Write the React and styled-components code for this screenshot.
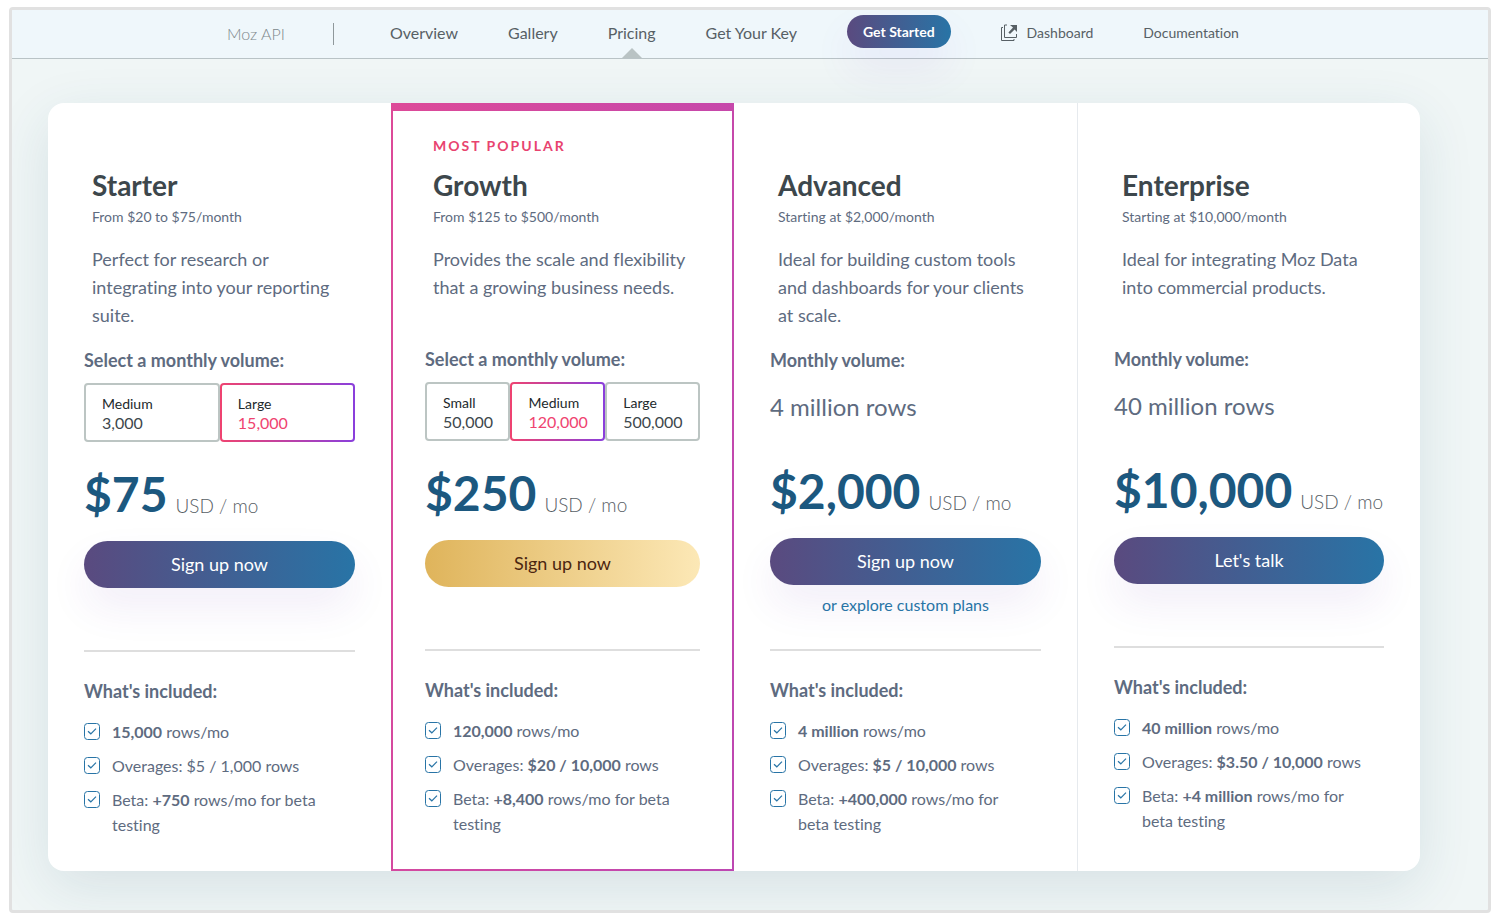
import React, { useState } from 'react';
import styled, { createGlobalStyle, css } from 'styled-components';

const GlobalStyle = createGlobalStyle`
  * {
    box-sizing: border-box;
  }

  body {
    margin: 0;
    padding: 7px 9px;
    background: #fff;
    color: #5e6b80;
    font-family: Lato, 'Liberation Sans', sans-serif;
    font-size: 16px;
    font-variant-ligatures: none;
  }

  h2, h3, p, ul, fieldset {
    margin: 0;
    padding: 0;
    border: 0;
  }

  button, input {
    font-family: inherit;
  }
`;

const gradients = {
  primary: 'linear-gradient(90deg, #5a4a7f 0%, #2874a6 100%)',
  gold: 'linear-gradient(90deg, #dfb45b 0%, #fce8b6 100%)',
  popular: 'linear-gradient(100deg, #dd4a98 0%, #bd47b2 100%)',
  selected: 'linear-gradient(90deg, #ef4370 0%, #8a3fdc 100%)',
};

const Page = styled.div`
  min-height: 906px;
  border: 3px solid #e1e1e1;
  border-radius: 4px;
  background: #f0f6f6;
  overflow: hidden;
`;

/* ---------- Top bar ---------- */

const Header = styled.header`
  position: relative;
  z-index: 1;
  border-bottom: 1px solid #b9c3c6;
  background: #eff7fb;
`;

const Nav = styled.nav`
  display: flex;
  align-items: center;
  justify-content: center;
  gap: 50px;
  height: 48px;
  padding-right: 34px;
  white-space: nowrap;
`;

const Brand = styled.span`
  margin-right: 6px;
  padding-right: 48px;
  border-right: 1px solid #8f989b;
  color: #7d878b;
  font-weight: 300;
  line-height: 22px;
`;

const NavLink = styled.a`
  display: flex;
  align-items: center;
  gap: 9px;
  height: 48px;
  padding-bottom: 3px;
  color: #576065;
  font-size: ${({ $small }) => ($small ? '14px' : '16px')};
  text-decoration: none;

  ${({ $active }) =>
    $active &&
    css`
      position: relative;

      &::after {
        content: '';
        position: absolute;
        bottom: 0;
        left: 50%;
        margin-left: -10px;
        border: 10px solid transparent;
        border-top: 0;
        border-bottom-color: #b9c3c4;
      }
    `}
`;

const StartButton = styled.button`
  height: 33px;
  margin-bottom: 5px;
  padding: 0 16px;
  border: 0;
  border-radius: 17px;
  background: ${gradients.primary};
  box-shadow: 0 20px 40px rgba(110, 50, 200, 0.08);
  color: #fff;
  font-size: 14px;
  font-weight: 700;
`;

/* ---------- Pricing table ---------- */

const Main = styled.main`
  padding: 44px 68px 39px 36px;
`;

const Plans = styled.section`
  display: grid;
  grid-template-columns: repeat(4, minmax(0, 1fr));
  min-height: 768px;
  border-radius: 16px;
  background: #fff;
  box-shadow: 0 16px 56px rgba(30, 80, 110, 0.12);
`;

const Plan = styled.article`
  padding: 33px 36px 32px;

  &:last-child {
    border-left: 1px solid #e6eaee;
  }

  ${({ $popular }) =>
    $popular &&
    css`
      padding: 25px 32px 30px;
      border: 2px solid transparent;
      border-top-width: 8px;
      background: linear-gradient(#fff, #fff) padding-box, ${gradients.popular} border-box;
    `}
`;

const Intro = styled.div`
  padding: 0 8px;
`;

const Tag = styled.p`
  height: 20px;
  color: #e8436f;
  font-size: 14px;
  font-weight: 700;
  letter-spacing: 2px;
  line-height: 20px;
  text-transform: uppercase;
`;

const PlanName = styled.h2`
  margin-top: 11px;
  color: #3d474c;
  font-size: 28px;
  font-weight: 700;
  line-height: 36px;
`;

const Range = styled.p`
  margin-top: 4px;
  font-size: 14px;
  line-height: 20px;
`;

const Description = styled.p`
  min-height: 85px;
  margin-top: 18px;
  padding-bottom: 2px;
  font-size: 18px;
  line-height: 28px;
`;

const SubTitle = styled.h3`
  font-size: 18px;
  font-weight: 700;
  line-height: 24px;
`;

const Volume = styled.fieldset`
  min-width: 0;
  margin-top: 17px;
`;

const VolumeLegend = styled(SubTitle).attrs({ as: 'legend' })`
  padding: 0;
`;

const Options = styled.div`
  display: flex;
  margin-top: 11px;
`;

const Option = styled.label`
  flex: 1 1 auto;
  height: 59px;
  padding: 9px 14px 0 16px;
  border: 2px solid #bcc5c3;
  border-radius: 4px;
  color: #22292c;
  font-size: 14px;
  line-height: 20px;
  white-space: nowrap;
  cursor: pointer;

  &:has(input:checked) {
    border-color: transparent;
    background: linear-gradient(#fff, #fff) padding-box, ${gradients.selected} border-box;
  }
`;

const HiddenRadio = styled.input`
  position: absolute;
  opacity: 0;
`;

const OptionRows = styled.span`
  display: block;
  color: #3d474c;
  font-size: 16px;
  line-height: 18px;

  input:checked ~ & {
    color: #ef4370;
  }
`;

const FixedVolume = styled.div`
  margin-top: 17px;
`;

const FixedRows = styled.p`
  height: 56px;
  margin-top: 11px;
  font-size: 24px;
  line-height: 48px;
`;

const Price = styled.p`
  display: flex;
  align-items: flex-end;
  gap: 8px;
  margin-top: 23px;
  color: #1c587f;
  font-size: 48px;
  font-weight: 700;
  line-height: 58px;
  white-space: nowrap;
`;

const Unit = styled.small`
  color: #576065;
  font-size: 19px;
  font-weight: 300;
  line-height: 34px;
`;

const Action = styled.button`
  display: block;
  width: 100%;
  height: 47px;
  margin-top: 18px;
  padding: 0 0 2px;
  border: 0;
  border-radius: 24px;
  background: ${({ $gold }) => ($gold ? gradients.gold : gradients.primary)};
  box-shadow: ${({ $gold }) => ($gold ? 'none' : '0 20px 40px rgba(90, 40, 170, 0.08)')};
  color: ${({ $gold }) => ($gold ? '#4c2610' : '#fff')};
  font-size: 18px;
  cursor: pointer;
`;

const Extra = styled.div`
  min-height: 62px;
  padding-top: 8px;
  text-align: center;
`;

const CustomLink = styled.a`
  display: block;
  padding-bottom: 32px;
  color: #2874a6;
  line-height: 24px;
  text-decoration: none;
`;

const Divider = styled.hr`
  height: 2px;
  margin: 0 0 27px;
  border: 0;
  background: #dedede;
`;

const Features = styled.ul`
  display: grid;
  gap: 9px;
  margin-top: 16px;
  padding-right: 12px;
  list-style: none;
`;

const Feature = styled.li`
  display: flex;
  align-items: flex-start;
  gap: 12px;
  line-height: 25px;

  svg {
    flex: none;
    margin-top: 4px;
  }
`;

const CheckIcon = () => (
  <svg width="16" height="17" viewBox="0 0 16 17" fill="none" stroke="#2874a6" aria-hidden="true">
    <rect x="0.5" y="0.5" width="15" height="16" rx="3" />
    <path d="M4 8.2l2.8 2.6L12 5.6" strokeWidth="1.2" />
  </svg>
);

const ExternalIcon = () => (
  <svg width="17" height="18" viewBox="0 0 17 18" fill="none" stroke="#576065" aria-hidden="true">
    <path d="M6 1H3.5v12.5h12V10" />
    <path d="M2 3.5H0.5v13H13V15" />
    <path d="M9 1h7v7l-2.4-2.4L9 10 7.4 8.4 12 3.6z" fill="#576065" stroke="none" />
  </svg>
);

const plans = [
  {
    name: 'Starter',
    range: 'From $20 to $75/month',
    description: 'Perfect for research or integrating into your reporting suite.',
    options: [
      { label: 'Medium', rows: '3,000' },
      { label: 'Large', rows: '15,000' },
    ],
    selected: '15,000',
    price: '$75',
    action: 'Sign up now',
    features: [
      <><b>15,000</b> rows/mo</>,
      <>Overages: $5 / 1,000 rows</>,
      <>Beta: <b>+750</b> rows/mo for beta testing</>,
    ],
  },
  {
    name: 'Growth',
    popular: true,
    range: 'From $125 to $500/month',
    description: 'Provides the scale and flexibility that a growing business needs.',
    options: [
      { label: 'Small', rows: '50,000' },
      { label: 'Medium', rows: '120,000' },
      { label: 'Large', rows: '500,000' },
    ],
    selected: '120,000',
    price: '$250',
    action: 'Sign up now',
    features: [
      <><b>120,000</b> rows/mo</>,
      <>Overages: <b>$20 / 10,000</b> rows</>,
      <>Beta: <b>+8,400</b> rows/mo for beta testing</>,
    ],
  },
  {
    name: 'Advanced',
    range: 'Starting at $2,000/month',
    description: 'Ideal for building custom tools and dashboards for your clients at scale.',
    volume: '4 million rows',
    price: '$2,000',
    action: 'Sign up now',
    link: 'or explore custom plans',
    features: [
      <><b>4 million</b> rows/mo</>,
      <>Overages: <b>$5 / 10,000</b> rows</>,
      <>Beta: <b>+400,000</b> rows/mo for beta testing</>,
    ],
  },
  {
    name: 'Enterprise',
    range: 'Starting at $10,000/month',
    description: 'Ideal for integrating Moz Data into commercial products.',
    volume: '40 million rows',
    price: '$10,000',
    action: "Let's talk",
    features: [
      <><b>40 million</b> rows/mo</>,
      <>Overages: <b>$3.50 / 10,000</b> rows</>,
      <>Beta: <b>+4 million</b> rows/mo for beta testing</>,
    ],
  },
];

const VolumePicker = ({ name, options, initial }) => {
  const [selected, setSelected] = useState(initial);

  return (
    <Volume>
      <VolumeLegend>Select a monthly volume:</VolumeLegend>
      <Options>
        {options.map(({ label, rows }) => (
          <Option key={rows}>
            <HiddenRadio
              type="radio"
              name={name}
              value={rows}
              checked={selected === rows}
              onChange={() => setSelected(rows)}
            />
            {label}
            <OptionRows>{rows}</OptionRows>
          </Option>
        ))}
      </Options>
    </Volume>
  );
};

const PlanCard = ({ plan }) => (
  <Plan $popular={plan.popular}>
    <Intro>
      <Tag>{plan.popular && 'Most popular'}</Tag>
      <PlanName>{plan.name}</PlanName>
      <Range>{plan.range}</Range>
      <Description>{plan.description}</Description>
    </Intro>
    {plan.options ? (
      <VolumePicker name={plan.name} options={plan.options} initial={plan.selected} />
    ) : (
      <FixedVolume>
        <SubTitle>Monthly volume:</SubTitle>
        <FixedRows>{plan.volume}</FixedRows>
      </FixedVolume>
    )}
    <Price>
      {plan.price}
      <Unit>USD / mo</Unit>
    </Price>
    <Action type="button" $gold={plan.popular}>{plan.action}</Action>
    <Extra>{plan.link && <CustomLink href="#custom">{plan.link}</CustomLink>}</Extra>
    <Divider />
    <SubTitle>What's included:</SubTitle>
    <Features>
      {plan.features.map((feature, i) => (
        <Feature key={i}>
          <CheckIcon />
          <span>{feature}</span>
        </Feature>
      ))}
    </Features>
  </Plan>
);

const App = () => (
  <>
    <GlobalStyle />
    <Page>
      <Header>
        <Nav>
          <Brand>Moz API</Brand>
          <NavLink href="#overview">Overview</NavLink>
          <NavLink href="#gallery">Gallery</NavLink>
          <NavLink href="#pricing" $active>Pricing</NavLink>
          <NavLink href="#key">Get Your Key</NavLink>
          <StartButton type="button">Get Started</StartButton>
          <NavLink href="#dashboard" $small>
            <ExternalIcon />
            Dashboard
          </NavLink>
          <NavLink href="#docs" $small>Documentation</NavLink>
        </Nav>
      </Header>
      <Main>
        <Plans>
          {plans.map((plan) => (
            <PlanCard key={plan.name} plan={plan} />
          ))}
        </Plans>
      </Main>
    </Page>
  </>
);

export default App;
